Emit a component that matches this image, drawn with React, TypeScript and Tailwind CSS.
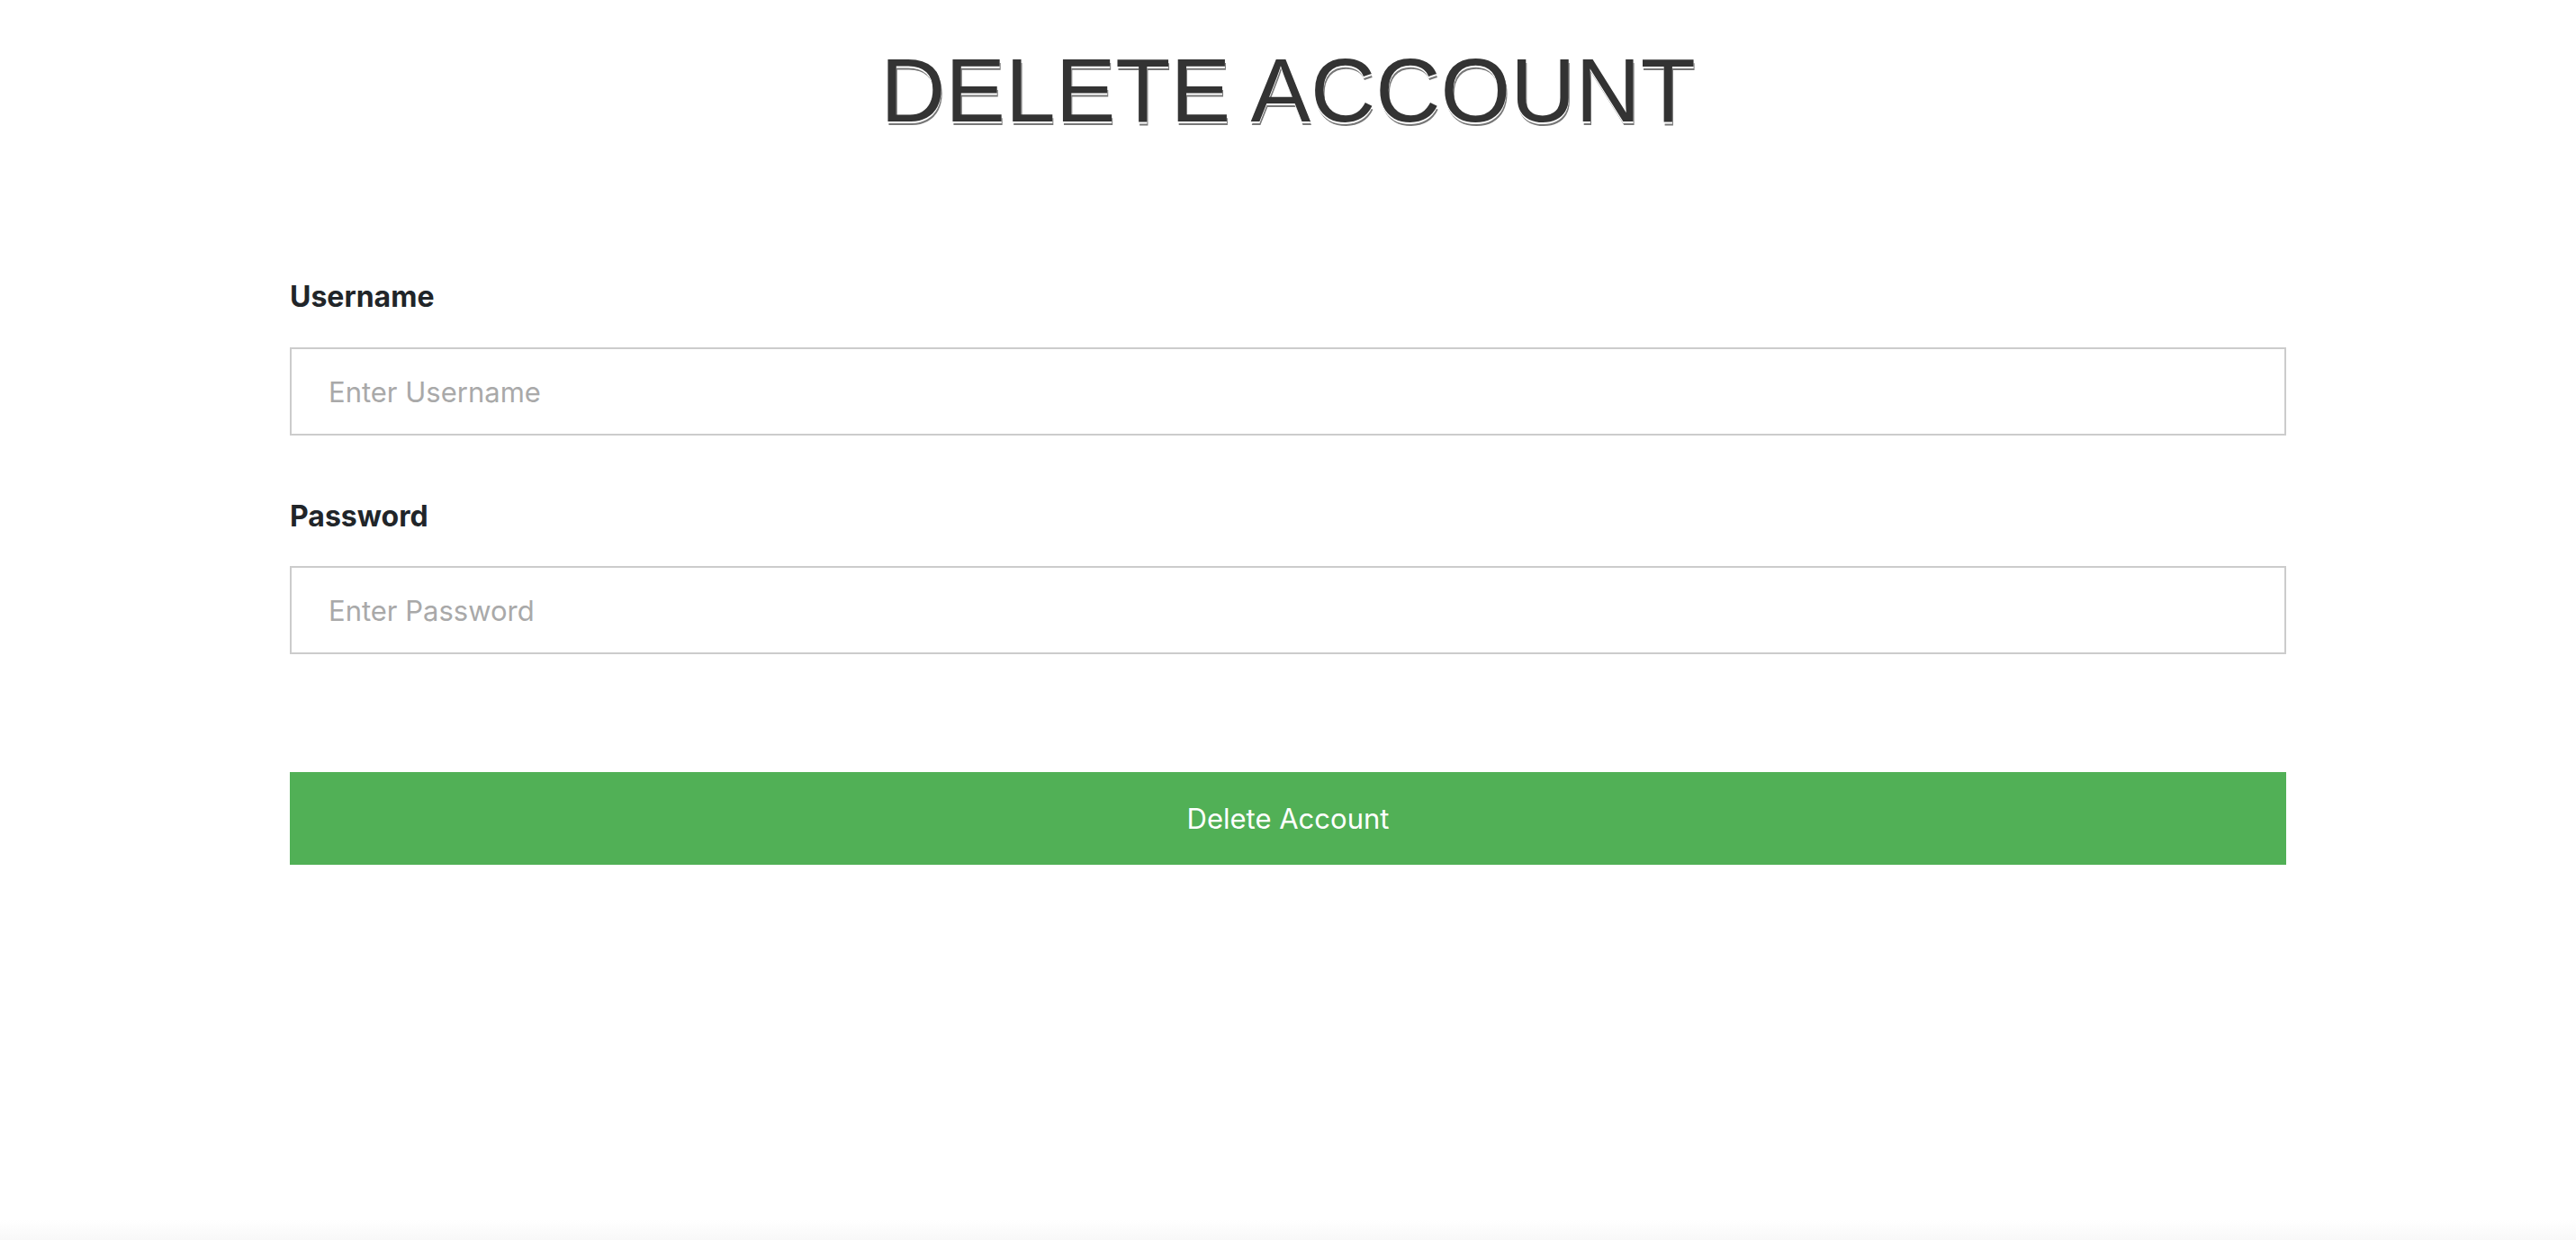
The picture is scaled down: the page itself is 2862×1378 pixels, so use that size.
import React from "react";

export default function App() {
  return (
    <div className="min-h-screen w-full bg-white flex flex-col" style={{ fontFamily: "Inter, 'Noto Sans', sans-serif" }}>
      <h1
        className="pt-[50px] text-center text-[100px] leading-[100px] font-normal text-[#333333] [font-family:'Liberation_Sans',Arial,sans-serif] [text-shadow:0_2px_0_#ffffff,1px_4px_0_#777777]"
      >
        DELETE ACCOUNT
      </h1>
      <form className="mx-auto w-[2218px] pt-[162px] flex flex-col" onSubmit={(e) => e.preventDefault()}>
        <label className="h-[36px] text-[32px] leading-[36px] font-bold text-[#212529]">Username</label>
        <input
          type="text"
          placeholder="Enter Username"
          className="mt-[38px] h-[98px] w-full border-2 border-[#cccccc] bg-white px-[41px] text-[31px] text-[#333] placeholder:text-[#a9a9a9] outline-none"
        />
        <label className="mt-[72px] h-[36px] text-[32px] leading-[36px] font-bold text-[#212529]">Password</label>
        <input
          type="password"
          placeholder="Enter Password"
          className="mt-[37px] h-[98px] w-full border-2 border-[#cccccc] bg-white px-[41px] text-[31px] text-[#333] placeholder:text-[#a9a9a9] outline-none"
        />
        <button
          type="submit"
          className="mt-[131px] h-[103px] w-full bg-[#51b056] text-white text-[31px] leading-none"
        >
          Delete Account
        </button>
      </form>
      <div className="flex-1" />
      <div className="h-[22px] w-full bg-gradient-to-b from-white to-[#f8f8f8]" />
    </div>
  );
}
